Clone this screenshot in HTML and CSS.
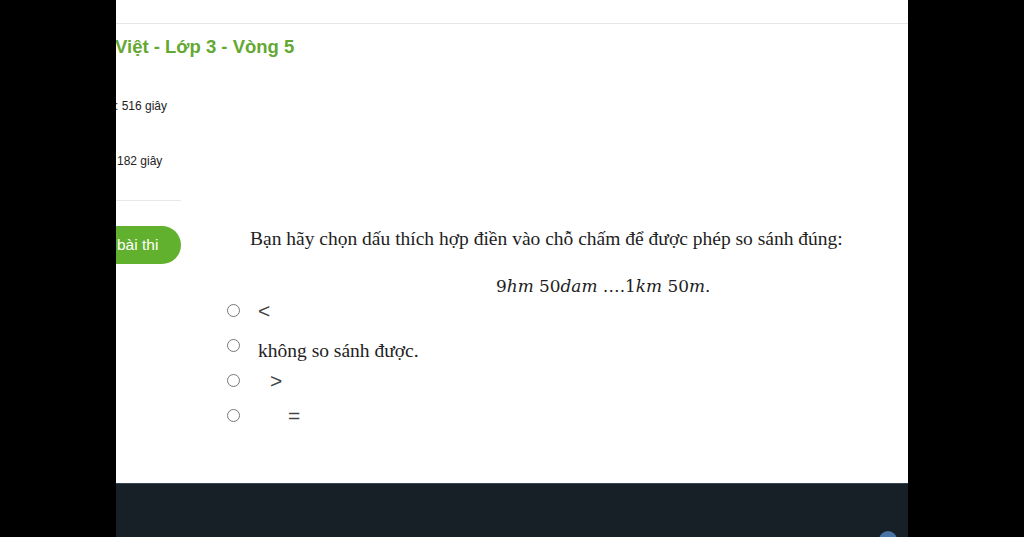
FILE: index.html
```html
<!DOCTYPE html>
<html lang="vi">
<head>
    <meta charset="UTF-8">
    <meta name="viewport" content="width=device-width, initial-scale=1.0">
    <title>Tiếng Việt - Lớp 3 - Vòng 5</title>
    <link rel="stylesheet" href="styles.css">
</head>
<body>
    <div class="page">
        <div class="topbar"></div>

        <h1 class="title">Việt - Lớp 3 - Vòng 5</h1>

        <div class="exam">
            <div class="sidebar">
                <div class="stat stat-first">: 516 giây</div>
                <div class="stat stat-second">182 giây</div>
                <hr class="divider">
                <button class="submit">bài thi</button>
            </div>

            <div class="question">
                <p class="prompt">Bạn hãy chọn dấu thích hợp điền vào chỗ chấm để được phép so sánh đúng:</p>
                <p class="formula">9<i>hm</i> 50<i>dam</i> ….1<i>km</i> 50<i>m</i>.</p>

                <ul class="options">
                    <li class="option"><span class="radio"></span><span class="sign">&lt;</span></li>
                    <li class="option option-text"><span class="radio"></span><span class="answer">không so sánh được.</span></li>
                    <li class="option"><span class="radio"></span><span class="sign shift-1">&gt;</span></li>
                    <li class="option"><span class="radio"></span><span class="sign shift-2">=</span></li>
                </ul>
            </div>
        </div>

        <footer class="footer">
            <span class="to-top"></span>
        </footer>
    </div>
</body>
</html>
```

FILE: styles.css
```css
html, body {
    margin: 0;
    padding: 0;
    background-color: #000;
    height: 100%;
}
body {
    font-family: "Liberation Sans", Arial, sans-serif;
    color: #333;
}
.page {
    width: 792px;
    height: 537px;
    margin-left: 116px;
    background-color: #fff;
    overflow: hidden;
    display: flex;
    flex-direction: column;
}
.topbar {
    height: 23px;
    border-bottom: 1px solid #e6e6e6;
    flex-shrink: 0;
}
.title {
    margin: 12px 0 0 -1px;
    font-size: 18.5px;
    line-height: 22px;
    font-weight: bold;
    color: #64a832;
}
.exam {
    flex: 1;
    display: grid;
    grid-template-columns: 65px 1fr;
}
.sidebar {
    display: flex;
    flex-direction: column;
    align-items: flex-start;
}
.stat {
    font-size: 12px;
    line-height: 16px;
    color: #222;
    white-space: nowrap;
}
.stat-first {
    margin-top: 40px;
    margin-left: -1px;
}
.stat-second {
    margin-top: 39px;
    margin-left: 1px;
}
.divider {
    width: 65px;
    margin: 31px 0 0;
    border: none;
    border-top: 1px solid #e8e8e8;
}
.submit {
    margin-top: 25px;
    width: 65px;
    height: 38px;
    padding: 0 0 0 1px;
    text-align: left;
    border: none;
    border-radius: 0 19px 19px 0;
    background-color: #62b12e;
    color: #fff;
    font-family: "Liberation Sans", Arial, sans-serif;
    font-size: 15.5px;
}
.question {
    padding-top: 169px;
    font-family: "Liberation Serif", "Times New Roman", serif;
    color: #1e1e1e;
}
.prompt {
    margin: 0 0 0 69px;
    font-size: 19.5px;
    line-height: 24px;
}
.formula {
    margin: 28px 0 0 315px;
    font-family: "DejaVu Serif", serif;
    font-size: 16.9px;
    line-height: 14px;
}
.options {
    list-style: none;
    margin: 0;
    padding: 0 0 0 46px;
}
.option {
    display: flex;
    align-items: center;
    height: 35px;
}
.option-text {
    align-items: flex-start;
}
.radio {
    width: 11px;
    height: 11px;
    border: 1px solid #777;
    border-radius: 50%;
    margin-right: 18px;
    flex-shrink: 0;
}
.option-text .radio {
    margin-top: 11px;
}
.sign {
    font-family: "Liberation Sans", Arial, sans-serif;
    font-size: 21px;
    color: #444;
}
.shift-1 {
    padding-left: 12px;
}
.shift-2 {
    padding-left: 30px;
}
.answer {
    font-size: 19.5px;
    line-height: 22px;
    margin-top: 12px;
}
.footer {
    position: relative;
    height: 53px;
    flex-shrink: 0;
    background-color: #172027;
    border-top: 1px solid #38434c;
}
.to-top {
    position: absolute;
    left: 763px;
    top: 47px;
    width: 18px;
    height: 18px;
    border-radius: 50%;
    background-color: #4a73a6;
}
```
